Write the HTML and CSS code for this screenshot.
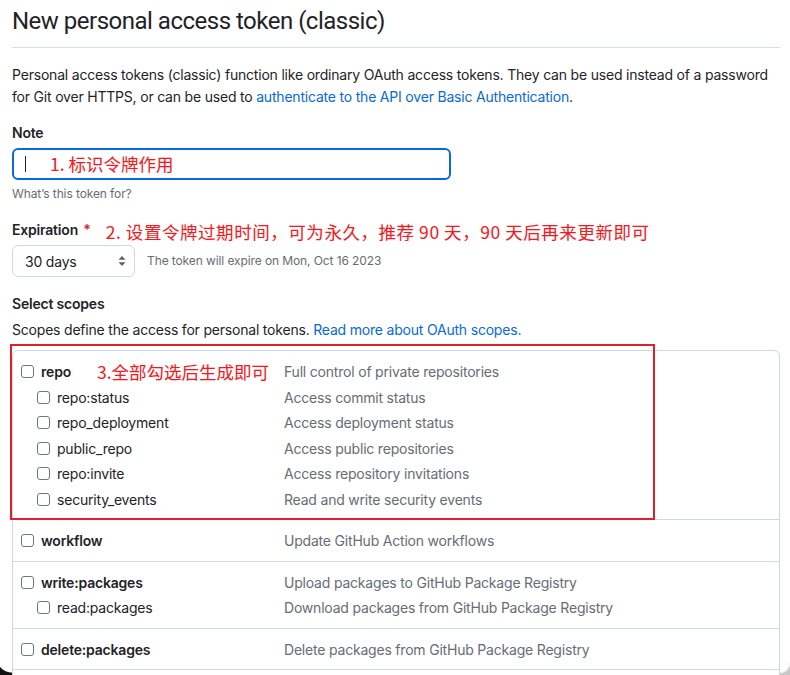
FILE: index.html
```html
<!DOCTYPE html>
<html lang="en">
<head>
<meta charset="utf-8">
<title>New personal access token (classic)</title>
<link rel="stylesheet" href="styles.css">
</head>
<body>
<div class="page">
  <header class="head"><h1 class="title">New personal access token (classic)</h1></header>
  <p class="intro">Personal access tokens (classic) function like ordinary OAuth access tokens. They can be used instead of a password for Git over HTTPS, or can be used to <a class="link" href="#">authenticate to the API over Basic Authentication</a>.</p>

  <div class="field note-field">
    <div class="lbl">Note</div>
    <div class="input"><span class="caret"></span><span class="anno anno-1">1. 标识令牌作用</span></div>
    <div class="hint">What’s this token for?</div>
  </div>

  <div class="field exp-field">
    <div class="lbl-row"><span class="lbl">Expiration <span class="req">*</span></span><span class="anno anno-2">2. 设置令牌过期时间，可为永久，推荐 90 天，90 天后再来更新即可</span></div>
    <div class="sel-row">
      <div class="select"><span>30 days</span>
        <svg class="sel-arrows" width="8" height="12" viewBox="0 0 8 12"><path d="M4 1 L7.5 4.8 H0.5 Z M4 11 L7.5 7.2 H0.5 Z" fill="#59636e"/></svg>
      </div>
      <span class="hint">The token will expire on Mon, Oct 16 2023</span>
    </div>
  </div>

  <div class="field scope-field">
    <div class="lbl">Select scopes</div>
    <p class="scope-intro">Scopes define the access for personal tokens. <a class="link" href="#">Read more about OAuth scopes.</a></p>
    <div class="scopes">
      <div class="annobox"></div>
      <div class="group">
        <div class="row"><span class="cell"><span class="cb"></span><span class="name top">repo</span><span class="anno anno-3">3.全部勾选后生成即可</span></span><span class="desc">Full control of private repositories</span></div>
        <div class="row"><span class="cell sub"><span class="cb"></span><span class="name">repo:status</span></span><span class="desc">Access commit status</span></div>
        <div class="row"><span class="cell sub"><span class="cb"></span><span class="name">repo_deployment</span></span><span class="desc">Access deployment status</span></div>
        <div class="row"><span class="cell sub"><span class="cb"></span><span class="name">public_repo</span></span><span class="desc">Access public repositories</span></div>
        <div class="row"><span class="cell sub"><span class="cb"></span><span class="name">repo:invite</span></span><span class="desc">Access repository invitations</span></div>
        <div class="row"><span class="cell sub"><span class="cb"></span><span class="name">security_events</span></span><span class="desc">Read and write security events</span></div>
      </div>
      <div class="group">
        <div class="row"><span class="cell"><span class="cb"></span><span class="name top">workflow</span></span><span class="desc">Update GitHub Action workflows</span></div>
      </div>
      <div class="group">
        <div class="row"><span class="cell"><span class="cb"></span><span class="name top">write:packages</span></span><span class="desc">Upload packages to GitHub Package Registry</span></div>
        <div class="row"><span class="cell sub"><span class="cb"></span><span class="name">read:packages</span></span><span class="desc">Download packages from GitHub Package Registry</span></div>
      </div>
      <div class="group">
        <div class="row"><span class="cell"><span class="cb"></span><span class="name top">delete:packages</span></span><span class="desc">Delete packages from GitHub Package Registry</span></div>
      </div>
      <div class="group group-more"></div>
    </div>
  </div>
</div>
<div class="corner-bl"></div>
<div class="corner-br"></div>
</body>
</html>
```

FILE: styles.css
```css
html, body {
  margin: 0;
  padding: 0;
  background: #ffffff;
  overflow: hidden;
  height: 675px;
}
body {
  font-family: Inter, "Noto Sans", "Noto Sans CJK SC", sans-serif;
  color: #1f2328;
  font-size: 14px;
  line-height: 21px;
  letter-spacing: -0.2px;
}
.page {
  padding: 6px 10px 0 12px;
}
.head {
  border-bottom: 1px solid #d8dee4;
  padding-bottom: 11px;
}
.title {
  margin: 0;
  font-family: Roboto, Inter, sans-serif;
  font-size: 24px;
  line-height: 30px;
  font-weight: 400;
  letter-spacing: -0.5px;
}
.intro {
  margin: 16px 0 0;
  line-height: 22px;
}
.link {
  color: #0969da;
  text-decoration: none;
}
.field { margin-top: 14px; }
.lbl {
  font-weight: 600;
}
.input {
  margin-top: 5px;
  width: 439px;
  height: 32px;
  box-sizing: border-box;
  border: 2px solid #0969da;
  border-radius: 6px;
  display: flex;
  align-items: center;
  padding-left: 11px;
}
.caret {
  width: 1px;
  height: 16px;
  background: #1f2328;
}
.anno {
  font-family: "Noto Sans CJK SC", sans-serif;
  color: #ec1c24;
  font-size: 17.5px;
  line-height: 22px;
  letter-spacing: 0;
  text-shadow: 0 0 2px #fff, 0 0 3px #e6e6e6;
  white-space: nowrap;
}
.anno-1 { margin-left: 24px; }
.hint {
  font-size: 12px;
  line-height: 18px;
  color: #656d76;
  letter-spacing: -0.1px;
}
.note-field .hint { margin-top: 5px; }
.exp-field { margin-top: 16px; }
.lbl-row {
  display: flex;
  align-items: center;
  height: 21px;
}
.req { color: #d1242f; margin-left: 2px; }
.anno-2 {
  margin-left: 15px;
  position: relative;
  top: 2px;
  letter-spacing: 0.55px;
}
.sel-row {
  margin-top: 5px;
  display: flex;
  align-items: center;
  gap: 12px;
}
.select {
  width: 123px;
  height: 32px;
  box-sizing: border-box;
  border: 1px solid #d0d7de;
  border-radius: 6px;
  background: #ffffff;
  display: flex;
  align-items: center;
  justify-content: space-between;
  padding: 0 8px 0 12px;
}
.sel-arrows { display: block; }
.scope-field { margin-top: 16px; }
.scope-intro {
  margin: 5px 0 0;
}
.scopes {
  position: relative;
  margin-top: 10px;
  border: 1px solid #d0d7de;
  border-radius: 6px;
}
.group {
  padding: 8px 0 7px;
  border-bottom: 1px solid #d0d7de;
}
.group-more {
  height: 30px;
  padding: 0;
  border-bottom: 0;
}
.row {
  height: 25.5px;
  display: flex;
  align-items: center;
  padding-left: 8px;
}
.cell {
  width: 263px;
  display: flex;
  align-items: center;
}
.cell.sub { padding-left: 16px; box-sizing: border-box; }
.cb {
  width: 13px;
  height: 13px;
  box-sizing: border-box;
  border: 1px solid #6e7781;
  border-radius: 3px;
  background: #fff;
  flex: none;
}
.name { margin-left: 7px; }
.name.top { font-weight: 600; }
.anno-3 { margin-left: 26px; }
.desc { color: #656d76; }
.annobox {
  position: absolute;
  left: -3px;
  top: -7px;
  width: 645px;
  height: 176px;
  box-sizing: border-box;
  border: 2px solid #e0202a;
  pointer-events: none;
  z-index: 2;
}
.corner-bl {
  position: fixed;
  left: 0;
  bottom: 0;
  width: 12px;
  height: 18px;
  background: radial-gradient(circle at 100% 0, transparent 15px, #111 16px);
}
.corner-br {
  position: fixed;
  right: 0;
  bottom: 0;
  width: 10px;
  height: 12px;
  background: radial-gradient(circle at 0 0, transparent 9px, #c8c8c8 11px);
}
```
